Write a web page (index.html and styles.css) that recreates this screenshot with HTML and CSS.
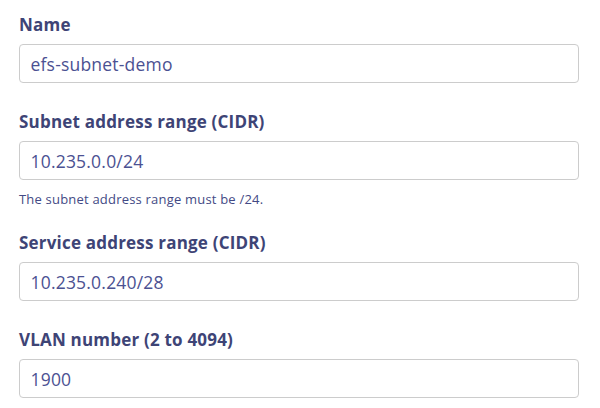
FILE: index.html
```html
<!DOCTYPE html>
<html>
<head>
<meta charset="utf-8">
<link rel="stylesheet" href="styles.css">
</head>
<body>
<form class="form">
  <div class="field">
    <label class="label">Name</label>
    <div class="input">efs-subnet-demo</div>
  </div>
  <div class="field">
    <label class="label">Subnet address range (CIDR)</label>
    <div class="input">10.235.0.0/24</div>
    <div class="help">The subnet address range must be /24.</div>
  </div>
  <div class="field">
    <label class="label">Service address range (CIDR)</label>
    <div class="input">10.235.0.240/28</div>
  </div>
  <div class="field">
    <label class="label">VLAN number (2 to 4094)</label>
    <div class="input">1900</div>
  </div>
</form>
</body>
</html>
```
FILE: styles.css
```css
html, body {
  margin: 0;
  padding: 0;
  background: #ffffff;
}
body {
  font-family: "Open Sans", "Liberation Sans", sans-serif;
  width: 600px;
  height: 408px;
  overflow: hidden;
}
.form {
  padding: 15px 21px 0 19px;
  display: flex;
  flex-direction: column;
  gap: 29px;
}
.field {
  display: flex;
  flex-direction: column;
}
.label {
  font-size: 17px;
  font-weight: 700;
  letter-spacing: 0.2px;
  color: #3e4476;
  line-height: 20px;
  margin-bottom: 9px;
}
.input {
  box-sizing: border-box;
  height: 39px;
  border: 1.5px solid #cccccc;
  border-radius: 4px;
  padding: 0 10.5px;
  display: flex;
  align-items: center;
  font-size: 17.5px;
  letter-spacing: 0.2px;
  color: #4b5192;
}
.help {
  margin-top: 11px;
  margin-bottom: -3px;
  font-size: 13px;
  letter-spacing: 0.2px;
  line-height: 16px;
  color: #434a85;
}
```
